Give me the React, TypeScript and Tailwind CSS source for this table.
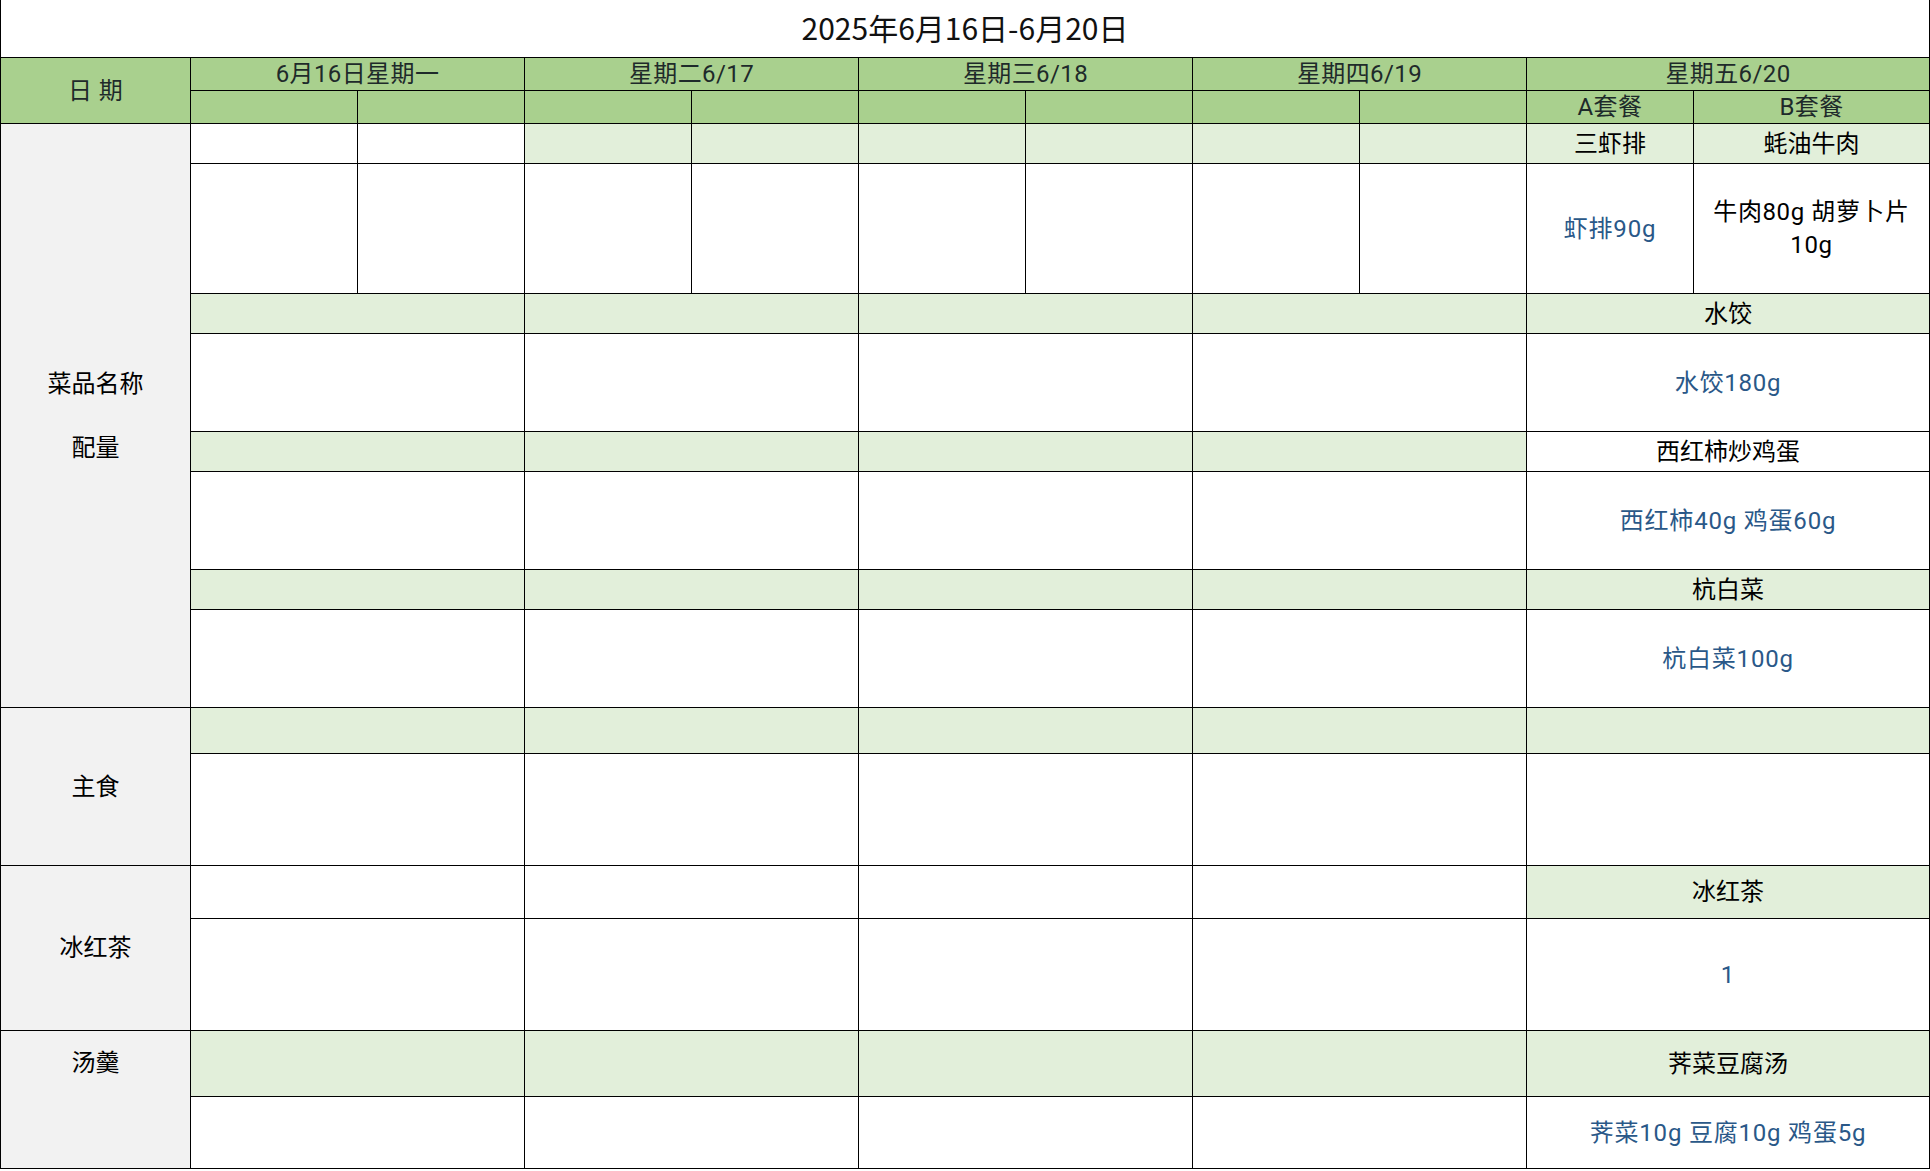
import React from "react";

const G = "bg-[#a9d08e]";
const L = "bg-[#e2efda]";
const W = "bg-white";
const S = "bg-[#f2f2f2]";
const BLUE = "text-[#2a5888] tracking-[0.8px]";
const HD = "text-[#1e2a2a] tracking-[0.4px]";

function C({
  bg,
  span2,
  children,
  className = "",
}: {
  bg: string;
  span2?: boolean;
  children?: React.ReactNode;
  className?: string;
}) {
  return (
    <div
      className={`${bg} ${span2 ? "col-span-2" : ""} flex items-center justify-center text-center ${className}`}
    >
      {children}
    </div>
  );
}

export default function App() {
  const four = (bg: string) =>
    [0, 1, 2, 3].map((i) => <C key={i} bg={bg} span2 />);
  const eight = (bg: string) =>
    [0, 1, 2, 3, 4, 5, 6, 7].map((i) => <C key={i} bg={bg} />);

  return (
    <div
      className="w-[1930px] h-[1171px] bg-white text-[24px] leading-[32px] text-black"
      style={{ fontFamily: 'Roboto, "Noto Sans CJK SC", sans-serif' }}
    >
      <div
        className="h-[57px] border-l border-r border-black flex items-center justify-center text-[30px] text-[#111] pb-[3px]"
        style={{ fontFamily: '"Noto Sans CJK SC", sans-serif' }}
      >
        2025年6月16日-6月20日
      </div>
      <div className="grid gap-px bg-black p-px w-[1930px] grid-cols-[189px_repeat(9,166px)_235px] grid-rows-[32px_32px_39px_129px_39px_97px_39px_97px_39px_97px_45px_111px_52px_111px_65px_71px]">
        {/* header row 1 */}
        <C bg={G} className={`row-span-2 ${HD}`}>
          日 期
        </C>
        <C bg={G} span2 className={HD}>6月16日星期一</C>
        <C bg={G} span2 className={HD}>星期二6/17</C>
        <C bg={G} span2 className={HD}>星期三6/18</C>
        <C bg={G} span2 className={HD}>星期四6/19</C>
        <C bg={G} span2 className={HD}>星期五6/20</C>
        {/* header row 2 */}
        {eight(G)}
        <C bg={G} className={HD}>A套餐</C>
        <C bg={G} className={HD}>B套餐</C>

        {/* r1 */}
        <C bg={S} className="row-span-8 flex-col">
          <span>菜品名称</span>
          <span>&nbsp;</span>
          <span>配量</span>
        </C>
        <C bg={W} />
        <C bg={W} />
        {[0, 1, 2, 3, 4, 5].map((i) => (
          <C key={i} bg={L} />
        ))}
        <C bg={L}>三虾排</C>
        <C bg={L}>蚝油牛肉</C>
        {/* r2 */}
        {eight(W)}
        <C bg={W} className={BLUE}>虾排90g</C>
        <C bg={W} className="leading-[33px] px-1 tracking-[0.6px]">
          牛肉80g 胡萝卜片
          <br />
          10g
        </C>
        {/* r3 */}
        {four(L)}
        <C bg={L} span2>水饺</C>
        {/* r4 */}
        {four(W)}
        <C bg={W} span2 className={BLUE}>水饺180g</C>
        {/* r5 */}
        {four(L)}
        <C bg={W} span2>西红柿炒鸡蛋</C>
        {/* r6 */}
        {four(W)}
        <C bg={W} span2 className={BLUE}>西红柿40g 鸡蛋60g</C>
        {/* r7 */}
        {four(L)}
        <C bg={L} span2>杭白菜</C>
        {/* r8 */}
        {four(W)}
        <C bg={W} span2 className={BLUE}>杭白菜100g</C>

        {/* 主食 */}
        <C bg={S} className="row-span-2">主食</C>
        {four(L)}
        <C bg={L} span2 />
        {four(W)}
        <C bg={W} span2 />

        {/* 冰红茶 */}
        <C bg={S} className="row-span-2">冰红茶</C>
        {four(W)}
        <C bg={L} span2>冰红茶</C>
        {four(W)}
        <C bg={W} span2 className={BLUE}>1</C>

        {/* 汤羹 */}
        <div className={`${S} row-span-2 flex justify-center items-start pt-[16px]`}>汤羹</div>
        {four(L)}
        <C bg={L} span2>荠菜豆腐汤</C>
        {four(W)}
        <C bg={W} span2 className={BLUE}>荠菜10g 豆腐10g 鸡蛋5g</C>
      </div>
    </div>
  );
}
